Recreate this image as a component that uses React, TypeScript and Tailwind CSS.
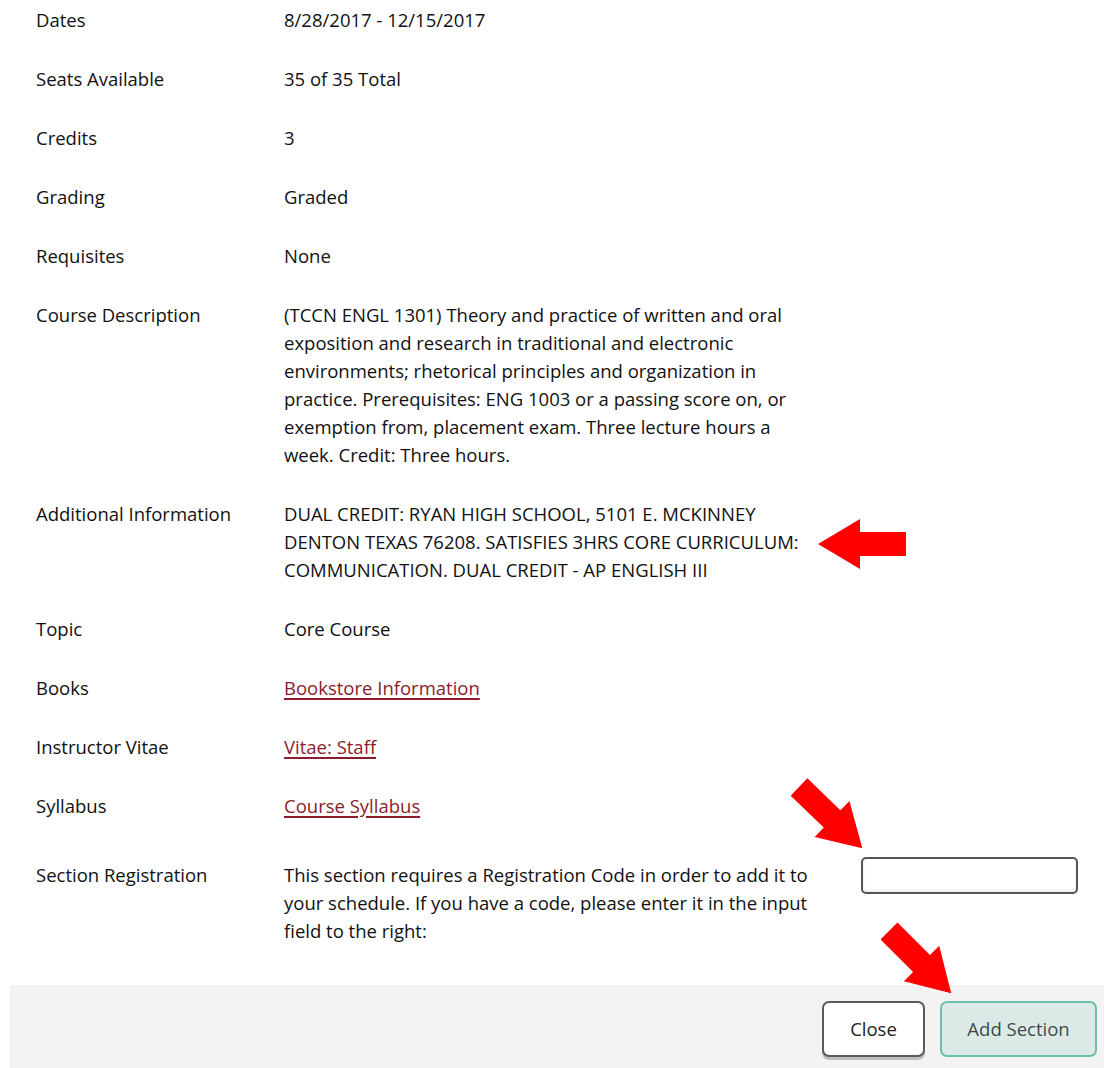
const rows: { label: string; value: React.ReactNode }[] = [
  { label: 'Dates', value: '8/28/2017 - 12/15/2017' },
  { label: 'Seats Available', value: '35 of 35 Total' },
  { label: 'Credits', value: '3' },
  { label: 'Grading', value: 'Graded' },
  { label: 'Requisites', value: 'None' },
  {
    label: 'Course Description',
    value:
      '(TCCN ENGL 1301) Theory and practice of written and oral exposition and research in traditional and electronic environments; rhetorical principles and organization in practice. Prerequisites: ENG 1003 or a passing score on, or exemption from, placement exam. Three lecture hours a week. Credit: Three hours.',
  },
  {
    label: 'Additional Information',
    value:
      'DUAL CREDIT: RYAN HIGH SCHOOL, 5101 E. MCKINNEY DENTON TEXAS 76208. SATISFIES 3HRS CORE CURRICULUM: COMMUNICATION. DUAL CREDIT - AP ENGLISH III',
  },
  { label: 'Topic', value: 'Core Course' },
  { label: 'Books', value: <Link text="Bookstore Information" /> },
  { label: 'Instructor Vitae', value: <Link text="Vitae: Staff" /> },
  { label: 'Syllabus', value: <Link text="Course Syllabus" /> },
];

function Link({ text }: { text: string }) {
  return (
    <a href="#" className="text-[#8c1c2c] underline underline-offset-[3px] decoration-[1.5px]">
      {text}
    </a>
  );
}

// red call-out arrow, pointing right in its own frame (tail at 0, tip at 88)
const ARROW = '0,-12 46,-12 46,-25 88,0 46,25 46,12 0,12';

export default function App() {
  return (
    <div
      className="relative w-[1112px] h-[1068px] bg-white text-[#111] text-[18.5px] font-medium leading-[28px] overflow-hidden"
      style={{ fontFamily: '"Open Sans", "Liberation Sans", sans-serif' }}
    >
      <div className="pl-[36px] pt-[6px]">
        <div className="grid grid-cols-[248px_1fr] gap-y-[31px]">
          {rows.map((r) => (
            <div key={r.label} className="contents">
              <div>{r.label}</div>
              <div className="w-[535px]">{r.value}</div>
            </div>
          ))}
          <div className="pt-[10px]">Section Registration</div>
          <div className="flex items-start gap-[42px]">
            <p className="w-[535px] pt-[10px]">
              This section requires a Registration Code in order to add it to your schedule. If you have a code,
              please enter it in the input field to the right:
            </p>
            <input
              type="text"
              className="mt-[6px] w-[217px] h-[37px] rounded-[5px] border-2 border-[#555] bg-white shadow-[inset_0_-2px_3px_rgba(0,0,0,0.08)] outline-none"
            />
          </div>
        </div>
      </div>

      <div className="absolute left-[10px] right-[8px] bottom-0 h-[83px] bg-[#f3f3f3] flex justify-end items-start gap-[15px] pt-[16px] pr-[7px]">
        <button className="w-[103px] h-[56px] rounded-[7px] border-2 border-[#5a5a5a] bg-white shadow-[0_3px_0_#bdbdbd] text-[#222]">
          Close
        </button>
        <button className="w-[157px] h-[56px] rounded-[7px] border-2 border-[#6cbfae] bg-[#dceae7] text-[#3c4a47]">
          Add Section
        </button>
      </div>

      <svg className="absolute inset-0 pointer-events-none" width="1112" height="1068">
        <polygon points={ARROW} fill="#ff0000" transform="translate(906,544) rotate(180)" />
        <polygon points={ARROW} fill="#ff0000" transform="translate(799,787) rotate(44)" />
        <polygon points={ARROW} fill="#ff0000" transform="translate(889,931) rotate(45)" />
      </svg>
    </div>
  );
}
